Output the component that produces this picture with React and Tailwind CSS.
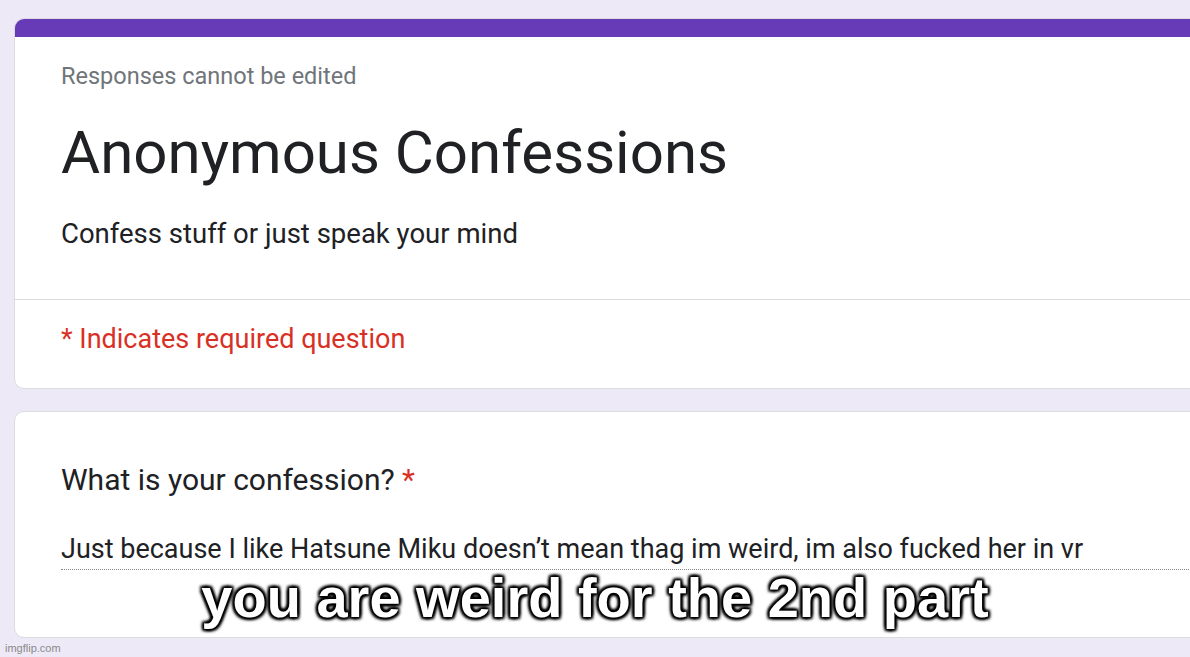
export default function App() {
  const roboto = { fontFamily: "Roboto, 'Liberation Sans', sans-serif" };
  return (
    <div className="relative w-[1190px] h-[657px] overflow-hidden bg-[#ede9f7]" style={roboto}>
      <div className="pt-[18px] pl-[14px] flex flex-col gap-[22px]">
        <div className="w-[1200px] rounded-[10px] bg-white border border-[#dadce0] overflow-hidden">
          <div className="h-[18px] bg-[#673ab7]" />
          <div className="pl-[46px] pt-[24px]">
            <div className="text-[23.5px] leading-[30px] text-[#70757a]">Responses cannot be edited</div>
            <div className="mt-[26px] text-[60px] leading-[72px] text-[#202124]">Anonymous Confessions</div>
            <div className="mt-[29px] text-[27.5px] leading-[32px] text-[#202124]">Confess stuff or just speak your mind</div>
          </div>
          <div className="mt-[49px] border-t border-[#dadce0]" />
          <div className="pl-[46px] pt-[23px] pb-[33px] text-[27px] leading-[32px] text-[#d93025]">
            * Indicates required question
          </div>
        </div>
        <div className="w-[1200px] h-[227px] rounded-[10px] bg-white border border-[#dadce0] pl-[46px] pt-[50px]">
          <div className="text-[30px] leading-[36px] text-[#202124]">
            What is your confession? <span className="text-[#d93025]">*</span>
          </div>
          <div className="mt-[35px] pb-[4px] border-b border-dotted border-[#80868b] text-[27px] leading-[32px] text-[#202124]">
            Just because I like Hatsune Miku doesn’t mean thag im weird, im also fucked her in vr
          </div>
        </div>
      </div>
      <div
        className="absolute left-0 right-0 top-[568px] text-center text-white text-[56px] leading-[60px] font-bold"
        style={{
          fontFamily: "'Liberation Sans', Arial, sans-serif",
          textShadow:
            "0 0 3px #000, 0 0 3px #000, 0 0 4px #000, 2px 2px 3px #000, -2px -2px 3px #000, 2px -2px 3px #000, -2px 2px 3px #000",
        }}
      >
        you are weird for the 2nd part
      </div>
      <div
        className="absolute left-[5px] top-[641px] text-[11px] leading-[14px] text-[#8a8a8a]"
        style={{ fontFamily: "'Liberation Sans', Arial, sans-serif" }}
      >
        imgflip.com
      </div>
    </div>
  );
}
